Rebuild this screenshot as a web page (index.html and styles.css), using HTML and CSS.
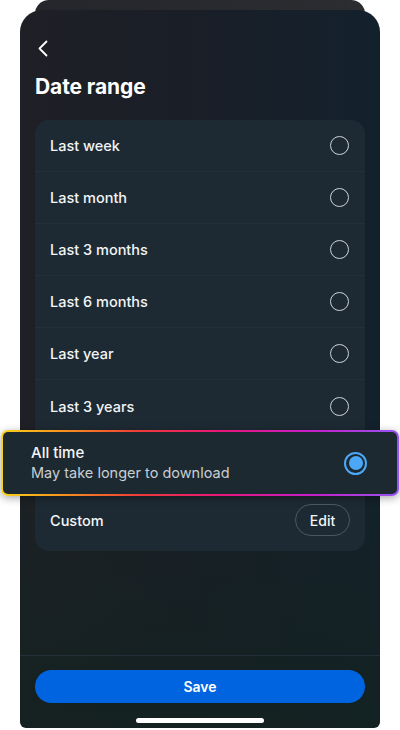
FILE: index.html
```html
<!DOCTYPE html>
<html lang="en">
<head>
<meta charset="utf-8">
<title>Date range</title>
<link rel="stylesheet" href="styles.css">
</head>
<body>
<div class="stage">
  <div class="back-card"></div>
  <div class="phone">
    <div class="header">
      <svg class="back" width="12" height="17" viewBox="0 0 12 17"><path d="M9.5 1.5 L2.5 8.5 L9.5 15.5" fill="none" stroke="#ffffff" stroke-width="1.8" stroke-linecap="round" stroke-linejoin="round"/></svg>
      <h1 class="title">Date range</h1>
    </div>
    <div class="list-card">
      <div class="row"><span class="label">Last week</span><span class="radio"></span></div>
      <div class="row"><span class="label">Last month</span><span class="radio"></span></div>
      <div class="row"><span class="label">Last 3 months</span><span class="radio"></span></div>
      <div class="row"><span class="label">Last 6 months</span><span class="radio"></span></div>
      <div class="row"><span class="label">Last year</span><span class="radio"></span></div>
      <div class="row"><span class="label">Last 3 years</span><span class="radio"></span></div>
      <div class="row-highlight">
        <div class="hl-text">
          <span class="hl-title">All time</span>
          <span class="hl-sub">May take longer to download</span>
        </div>
        <span class="radio-on"><span class="dot"></span></span>
      </div>
      <div class="row row-custom"><span class="label">Custom</span><span class="edit">Edit</span></div>
    </div>
    <div class="spacer"></div>
    <div class="footer">
      <div class="save">Save</div>
      <div class="home-bar"></div>
    </div>
  </div>
</div>
</body>
</html>
```

FILE: styles.css
```css
html, body {
  margin: 0;
  padding: 0;
  background: #ffffff;
}
body {
  width: 400px;
  height: 730px;
  overflow: hidden;
  font-family: Inter, "Noto Sans", Roboto, sans-serif;
  color: #f2f4f6;
}
.stage {
  display: flex;
  flex-direction: column;
  align-items: center;
}
.back-card {
  width: 330px;
  height: 22px;
  background: linear-gradient(90deg, #25262b, #2c2d31);
  border-radius: 14px 14px 0 0;
}
.phone {
  position: relative;
  z-index: 1;
  margin-top: -12px;
  width: 360px;
  height: 718px;
  border-radius: 22px 22px 6px 6px;
  background:
    linear-gradient(180deg, rgba(19,34,32,0) 55%, rgba(19,34,32,0.85) 100%),
    linear-gradient(90deg, #1f2026 0%, #1a1e27 45%, #13212d 100%);
  display: flex;
  flex-direction: column;
}
.header {
  padding: 30px 15px 0 15px;
  display: flex;
  flex-direction: column;
  align-items: flex-start;
}
.back {
  display: block;
  margin-left: 2px;
}
.title {
  margin: 17px 0 0 0;
  font-size: 21px;
  line-height: 26px;
  font-weight: 700;
  color: #ffffff;
  letter-spacing: -0.1px;
}
.list-card {
  margin: 20px 15px 0 15px;
  background: #1e2a33;
  border-radius: 14px;
  padding-bottom: 7px;
  display: flex;
  flex-direction: column;
}
.row {
  height: 52px;
  box-sizing: border-box;
  display: flex;
  align-items: center;
  justify-content: space-between;
  padding: 0 16px 0 15px;
  border-bottom: 1px solid #233039;
}
.row:nth-child(6) {
  border-bottom: none;
}
.label {
  font-size: 14.5px;
  font-weight: 500;
  color: #f2f4f6;
}
.radio {
  width: 19px;
  height: 19px;
  box-sizing: border-box;
  border: 1.6px solid #cfd4d8;
  border-radius: 50%;
}
.row-highlight {
  margin: -2px -34px 0 -34px;
  height: 66px;
  box-sizing: border-box;
  border: 2px solid transparent;
  border-radius: 7px;
  background:
    linear-gradient(#1d2931, #1d2931) padding-box,
    linear-gradient(90deg, #f8d21c 0%, #f7941d 15%, #ef3a3a 35%, #e8177a 55%, #c71ec8 78%, #9656f0 100%) border-box;
  display: flex;
  align-items: center;
  justify-content: space-between;
  padding: 0 30px 0 28px;
  box-shadow: 0 2px 8px rgba(0,0,0,0.35);
}
.hl-text {
  display: flex;
  flex-direction: column;
  gap: 1px;
  margin-top: -2px;
}
.hl-title {
  font-size: 15px;
  line-height: 19px;
  font-weight: 500;
  color: #f4f6f8;
}
.hl-sub {
  font-size: 14.5px;
  line-height: 19px;
  font-weight: 400;
  color: #c9ced3;
}
.radio-on {
  width: 23px;
  height: 23px;
  box-sizing: border-box;
  border: 2px solid #4aa8f7;
  border-radius: 50%;
  display: flex;
  align-items: center;
  justify-content: center;
}
.dot {
  width: 14px;
  height: 14px;
  border-radius: 50%;
  background: #4aa8f7;
}
.row-custom {
  height: 48px;
  border-bottom: none;
  padding-right: 15px;
}
.edit {
  width: 55px;
  height: 32px;
  box-sizing: border-box;
  border: 1px solid #4a5761;
  border-radius: 16px;
  display: flex;
  align-items: center;
  justify-content: center;
  font-size: 14px;
  font-weight: 500;
  color: #f2f4f6;
}
.spacer {
  flex: 1;
}
.footer {
  border-top: 1px solid #233039;
  padding: 14px 15px 0 15px;
  height: 73px;
  box-sizing: border-box;
  display: flex;
  flex-direction: column;
  align-items: center;
}
.save {
  align-self: stretch;
  height: 33px;
  border-radius: 17px;
  background: #0064e0;
  display: flex;
  align-items: center;
  justify-content: center;
  font-size: 14px;
  font-weight: 600;
  color: #ffffff;
}
.home-bar {
  margin-top: 15px;
  width: 128px;
  height: 5px;
  border-radius: 3px;
  background: #ffffff;
}
```
